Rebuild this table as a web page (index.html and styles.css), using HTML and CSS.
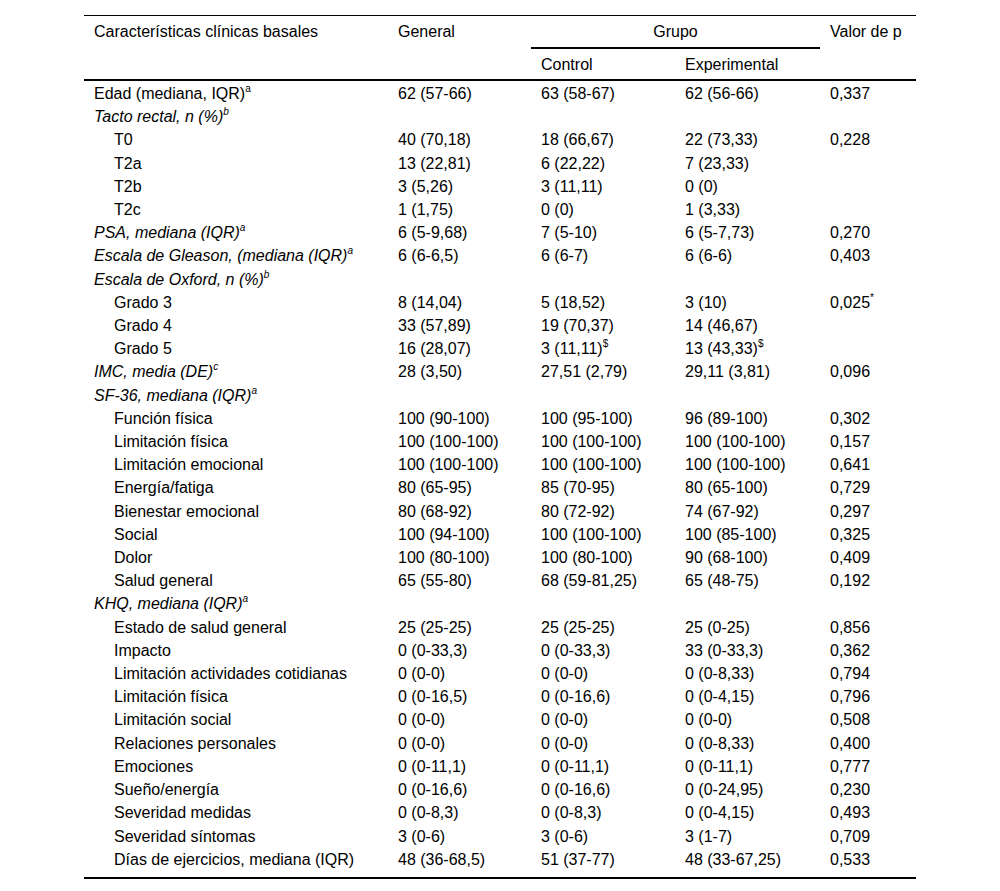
FILE: index.html
```html
<!DOCTYPE html>
<html lang="es">
<head>
<meta charset="utf-8">
<title>Características clínicas basales</title>
<link rel="stylesheet" href="styles.css">
</head>
<body>
<table class="tbl">
  <colgroup>
    <col class="c1"><col class="c2"><col class="c3"><col class="c4"><col class="c5">
  </colgroup>
  <thead>
    <tr class="h1">
      <th rowspan="2">Características clínicas basales</th>
      <th rowspan="2">General</th>
      <th colspan="2" class="grupo">Grupo</th>
      <th rowspan="2">Valor de p</th>
    </tr>
    <tr class="h2">
      <th>Control</th>
      <th>Experimental</th>
    </tr>
  </thead>
  <tbody>
    <tr><td>Edad (mediana, IQR)<sup>a</sup></td><td>62 (57-66)</td><td>63 (58-67)</td><td>62 (56-66)</td><td>0,337</td></tr>
    <tr><td class="cat">Tacto rectal, n (%)<sup>b</sup></td><td></td><td></td><td></td><td></td></tr>
    <tr><td class="sub">T0</td><td>40 (70,18)</td><td>18 (66,67)</td><td>22 (73,33)</td><td>0,228</td></tr>
    <tr><td class="sub">T2a</td><td>13 (22,81)</td><td>6 (22,22)</td><td>7 (23,33)</td><td></td></tr>
    <tr><td class="sub">T2b</td><td>3 (5,26)</td><td>3 (11,11)</td><td>0 (0)</td><td></td></tr>
    <tr><td class="sub">T2c</td><td>1 (1,75)</td><td>0 (0)</td><td>1 (3,33)</td><td></td></tr>
    <tr><td class="cat">PSA, mediana (IQR)<sup>a</sup></td><td>6 (5-9,68)</td><td>7 (5-10)</td><td>6 (5-7,73)</td><td>0,270</td></tr>
    <tr><td class="cat">Escala de Gleason, (mediana (IQR)<sup>a</sup></td><td>6 (6-6,5)</td><td>6 (6-7)</td><td>6 (6-6)</td><td>0,403</td></tr>
    <tr><td class="cat">Escala de Oxford, n (%)<sup>b</sup></td><td></td><td></td><td></td><td></td></tr>
    <tr><td class="sub">Grado 3</td><td>8 (14,04)</td><td>5 (18,52)</td><td>3 (10)</td><td>0,025<sup>*</sup></td></tr>
    <tr><td class="sub">Grado 4</td><td>33 (57,89)</td><td>19 (70,37)</td><td>14 (46,67)</td><td></td></tr>
    <tr><td class="sub">Grado 5</td><td>16 (28,07)</td><td>3 (11,11)<sup>$</sup></td><td>13 (43,33)<sup>$</sup></td><td></td></tr>
    <tr><td class="cat">IMC, media (DE)<sup>c</sup></td><td>28 (3,50)</td><td>27,51 (2,79)</td><td>29,11 (3,81)</td><td>0,096</td></tr>
    <tr><td class="cat">SF-36, mediana (IQR)<sup>a</sup></td><td></td><td></td><td></td><td></td></tr>
    <tr><td class="sub">Función física</td><td>100 (90-100)</td><td>100 (95-100)</td><td>96 (89-100)</td><td>0,302</td></tr>
    <tr><td class="sub">Limitación física</td><td>100 (100-100)</td><td>100 (100-100)</td><td>100 (100-100)</td><td>0,157</td></tr>
    <tr><td class="sub">Limitación emocional</td><td>100 (100-100)</td><td>100 (100-100)</td><td>100 (100-100)</td><td>0,641</td></tr>
    <tr><td class="sub">Energía/fatiga</td><td>80 (65-95)</td><td>85 (70-95)</td><td>80 (65-100)</td><td>0,729</td></tr>
    <tr><td class="sub">Bienestar emocional</td><td>80 (68-92)</td><td>80 (72-92)</td><td>74 (67-92)</td><td>0,297</td></tr>
    <tr><td class="sub">Social</td><td>100 (94-100)</td><td>100 (100-100)</td><td>100 (85-100)</td><td>0,325</td></tr>
    <tr><td class="sub">Dolor</td><td>100 (80-100)</td><td>100 (80-100)</td><td>90 (68-100)</td><td>0,409</td></tr>
    <tr><td class="sub">Salud general</td><td>65 (55-80)</td><td>68 (59-81,25)</td><td>65 (48-75)</td><td>0,192</td></tr>
    <tr><td class="cat">KHQ, mediana (IQR)<sup>a</sup></td><td></td><td></td><td></td><td></td></tr>
    <tr><td class="sub">Estado de salud general</td><td>25 (25-25)</td><td>25 (25-25)</td><td>25 (0-25)</td><td>0,856</td></tr>
    <tr><td class="sub">Impacto</td><td>0 (0-33,3)</td><td>0 (0-33,3)</td><td>33 (0-33,3)</td><td>0,362</td></tr>
    <tr><td class="sub">Limitación actividades cotidianas</td><td>0 (0-0)</td><td>0 (0-0)</td><td>0 (0-8,33)</td><td>0,794</td></tr>
    <tr><td class="sub">Limitación física</td><td>0 (0-16,5)</td><td>0 (0-16,6)</td><td>0 (0-4,15)</td><td>0,796</td></tr>
    <tr><td class="sub">Limitación social</td><td>0 (0-0)</td><td>0 (0-0)</td><td>0 (0-0)</td><td>0,508</td></tr>
    <tr><td class="sub">Relaciones personales</td><td>0 (0-0)</td><td>0 (0-0)</td><td>0 (0-8,33)</td><td>0,400</td></tr>
    <tr><td class="sub">Emociones</td><td>0 (0-11,1)</td><td>0 (0-11,1)</td><td>0 (0-11,1)</td><td>0,777</td></tr>
    <tr><td class="sub">Sueño/energía</td><td>0 (0-16,6)</td><td>0 (0-16,6)</td><td>0 (0-24,95)</td><td>0,230</td></tr>
    <tr><td class="sub">Severidad medidas</td><td>0 (0-8,3)</td><td>0 (0-8,3)</td><td>0 (0-4,15)</td><td>0,493</td></tr>
    <tr><td class="sub">Severidad síntomas</td><td>3 (0-6)</td><td>3 (0-6)</td><td>3 (1-7)</td><td>0,709</td></tr>
    <tr class="last"><td class="sub">Días de ejercicios, mediana (IQR)</td><td>48 (36-68,5)</td><td>51 (37-77)</td><td>48 (33-67,25)</td><td>0,533</td></tr>
  </tbody>
</table>
</body>
</html>
```

FILE: styles.css
```css
html, body {
  margin: 0;
  padding: 0;
  background: #fff;
}
body {
  padding: 15px 84px 0 84px;
  font-family: "Liberation Sans", Arial, sans-serif;
  font-size: 16px;
  color: #000;
}
.tbl {
  width: 832px;
  border-collapse: collapse;
  table-layout: fixed;
  border-top: 1px solid #000;
  border-bottom: 2px solid #000;
}
.c1 { width: 304px; }
.c2 { width: 143px; }
.c3 { width: 144px; }
.c4 { width: 145px; }
.c5 { width: 96px; }
.tbl th {
  font-weight: normal;
  text-align: left;
  vertical-align: top;
  padding: 6px 10px;
  line-height: 19px;
}
.tbl th.grupo {
  text-align: center;
  border-bottom: 2px solid #000;
  padding-bottom: 6px;
}
.tbl thead tr.h2 th {
  padding-top: 6px;
  padding-bottom: 5px;
}
.tbl thead {
  border-bottom: 2px solid #000;
}
.tbl td {
  padding: 3px 10px 1px 10px;
  line-height: 19.2px;
  vertical-align: top;
  white-space: nowrap;
}
.tbl tr.last td {
  padding-bottom: 8px;
}
.tbl td.cat {
  font-style: italic;
}
.tbl td.sub {
  padding-left: 30px;
}
.tbl sup {
  font-size: 10px;
  line-height: 0;
  vertical-align: 7px;
}
```
